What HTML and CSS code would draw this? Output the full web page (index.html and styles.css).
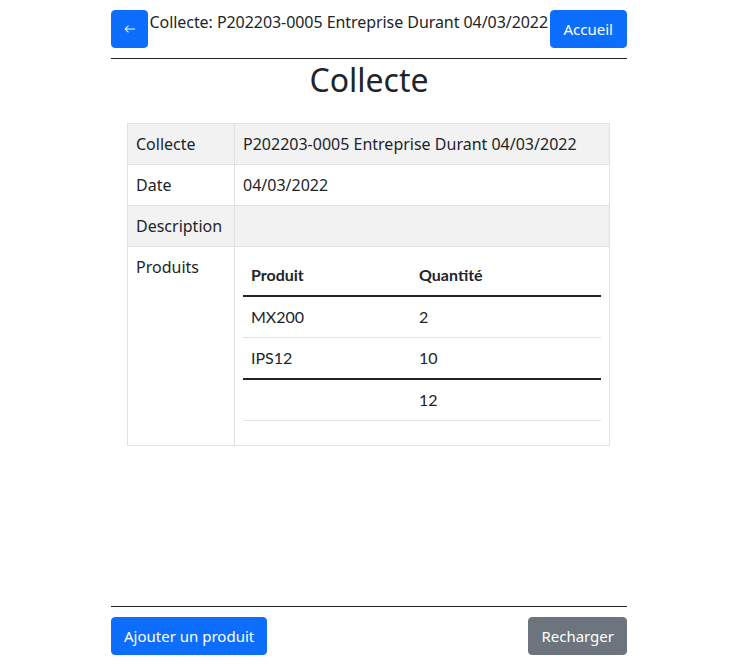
FILE: index.html
```html
<!DOCTYPE html>
<html lang="fr">
<head>
<meta charset="utf-8">
<title>Collecte</title>
<link rel="stylesheet" href="styles.css">
</head>
<body>
<div class="page">
  <header class="topbar">
    <button class="btn btn-primary btn-back" aria-label="Retour">
      <svg width="12" height="12" viewBox="0 0 16 16"><path d="M15 8a.6.6 0 0 0-.6-.6H2.9l3.2-3.2a.6.6 0 1 0-.85-.85l-4.2 4.2a.6.6 0 0 0 0 .85l4.2 4.2a.6.6 0 0 0 .85-.85L2.9 8.6h11.5A.6.6 0 0 0 15 8z" fill="#fff"/></svg>
    </button>
    <div class="title">Collecte: P202203-0005 Entreprise Durant 04/03/2022</div>
    <button class="btn btn-primary btn-home">Accueil</button>
  </header>
  <hr class="rule">
  <main class="main">
    <h1 class="heading">Collecte</h1>
    <div class="content">
      <table class="details">
        <tbody>
          <tr class="odd"><td class="label">Collecte</td><td>P202203-0005 Entreprise Durant 04/03/2022</td></tr>
          <tr><td class="label">Date</td><td>04/03/2022</td></tr>
          <tr class="odd"><td class="label">Description</td><td></td></tr>
          <tr><td class="label">Produits</td><td>
            <table class="products">
              <thead><tr><th class="c1">Produit</th><th>Quantité</th></tr></thead>
              <tbody>
                <tr><td>MX200</td><td>2</td></tr>
                <tr><td>IPS12</td><td>10</td></tr>
              </tbody>
              <tfoot><tr><td></td><td>12</td></tr></tfoot>
            </table>
          </td></tr>
        </tbody>
      </table>
    </div>
  </main>
  <hr class="rule">
  <footer class="bottombar">
    <button class="btn btn-primary">Ajouter un produit</button>
    <button class="btn btn-secondary">Recharger</button>
  </footer>
</div>
</body>
</html>
```
FILE: styles.css
```css
* { box-sizing: border-box; }
html, body { margin: 0; padding: 0; }
body {
  font-family: "Noto Sans", "Open Sans", sans-serif;
  font-size: 16px;
  color: #212529;
  background: #fff;
}
.page {
  width: 516px;
  margin: 0 auto;
  min-height: 665px;
  display: flex;
  flex-direction: column;
}
.topbar {
  display: flex;
  justify-content: space-between;
  align-items: flex-start;
  margin-top: 10px;
}
.title {
  line-height: 24px;
  white-space: nowrap;
  letter-spacing: -0.06px;
}
.btn {
  font-family: inherit;
  font-size: 15px;
  line-height: 24px;
  padding: 6px 12px;
  border: 1px solid transparent;
  border-radius: 4px;
  color: #fff;
  height: 38px;
}
.btn-primary { background: #0d6efd; border-color: #0d6efd; }
.btn-secondary { background: #6c757d; border-color: #6c757d; }
.btn-home { padding: 6px 13px; }
.btn-back {
  width: 37px;
  padding: 0;
  display: flex;
  align-items: center;
  justify-content: center;
}
.rule {
  border: 0;
  border-top: 1px solid #212529;
  margin: 10px 0;
  height: 0;
}
.main { flex: 1; }
.heading {
  margin: -8px 0 24px;
  text-align: center;
  font-weight: 400;
  font-size: 32px;
  line-height: 1.2;
}
.content { padding: 0 17px 0 16px; }
.details {
  width: 100%;
  border-collapse: collapse;
}
.details > tbody > tr > td {
  border: 1px solid #dee2e6;
  padding: 8px;
  line-height: 24px;
  vertical-align: top;
}
.details > tbody > tr.odd > td { background: #f2f2f2; }
.details td.label { width: 107px; }
.products {
  width: 100%;
  border-collapse: collapse;
  margin-bottom: 16px;
  font-family: Lato, sans-serif;
}
.products th, .products td {
  text-align: left;
  padding: 8px;
  line-height: 24px;
  border-bottom: 1px solid #dee2e6;
}
.products th { font-weight: 700; border-bottom: 2px solid #212529; }
.products th.c1 { width: 168px; }
.products tfoot td { border-top: 2px solid #212529; }
.bottombar {
  display: flex;
  justify-content: space-between;
  margin-bottom: 10px;
}
```
